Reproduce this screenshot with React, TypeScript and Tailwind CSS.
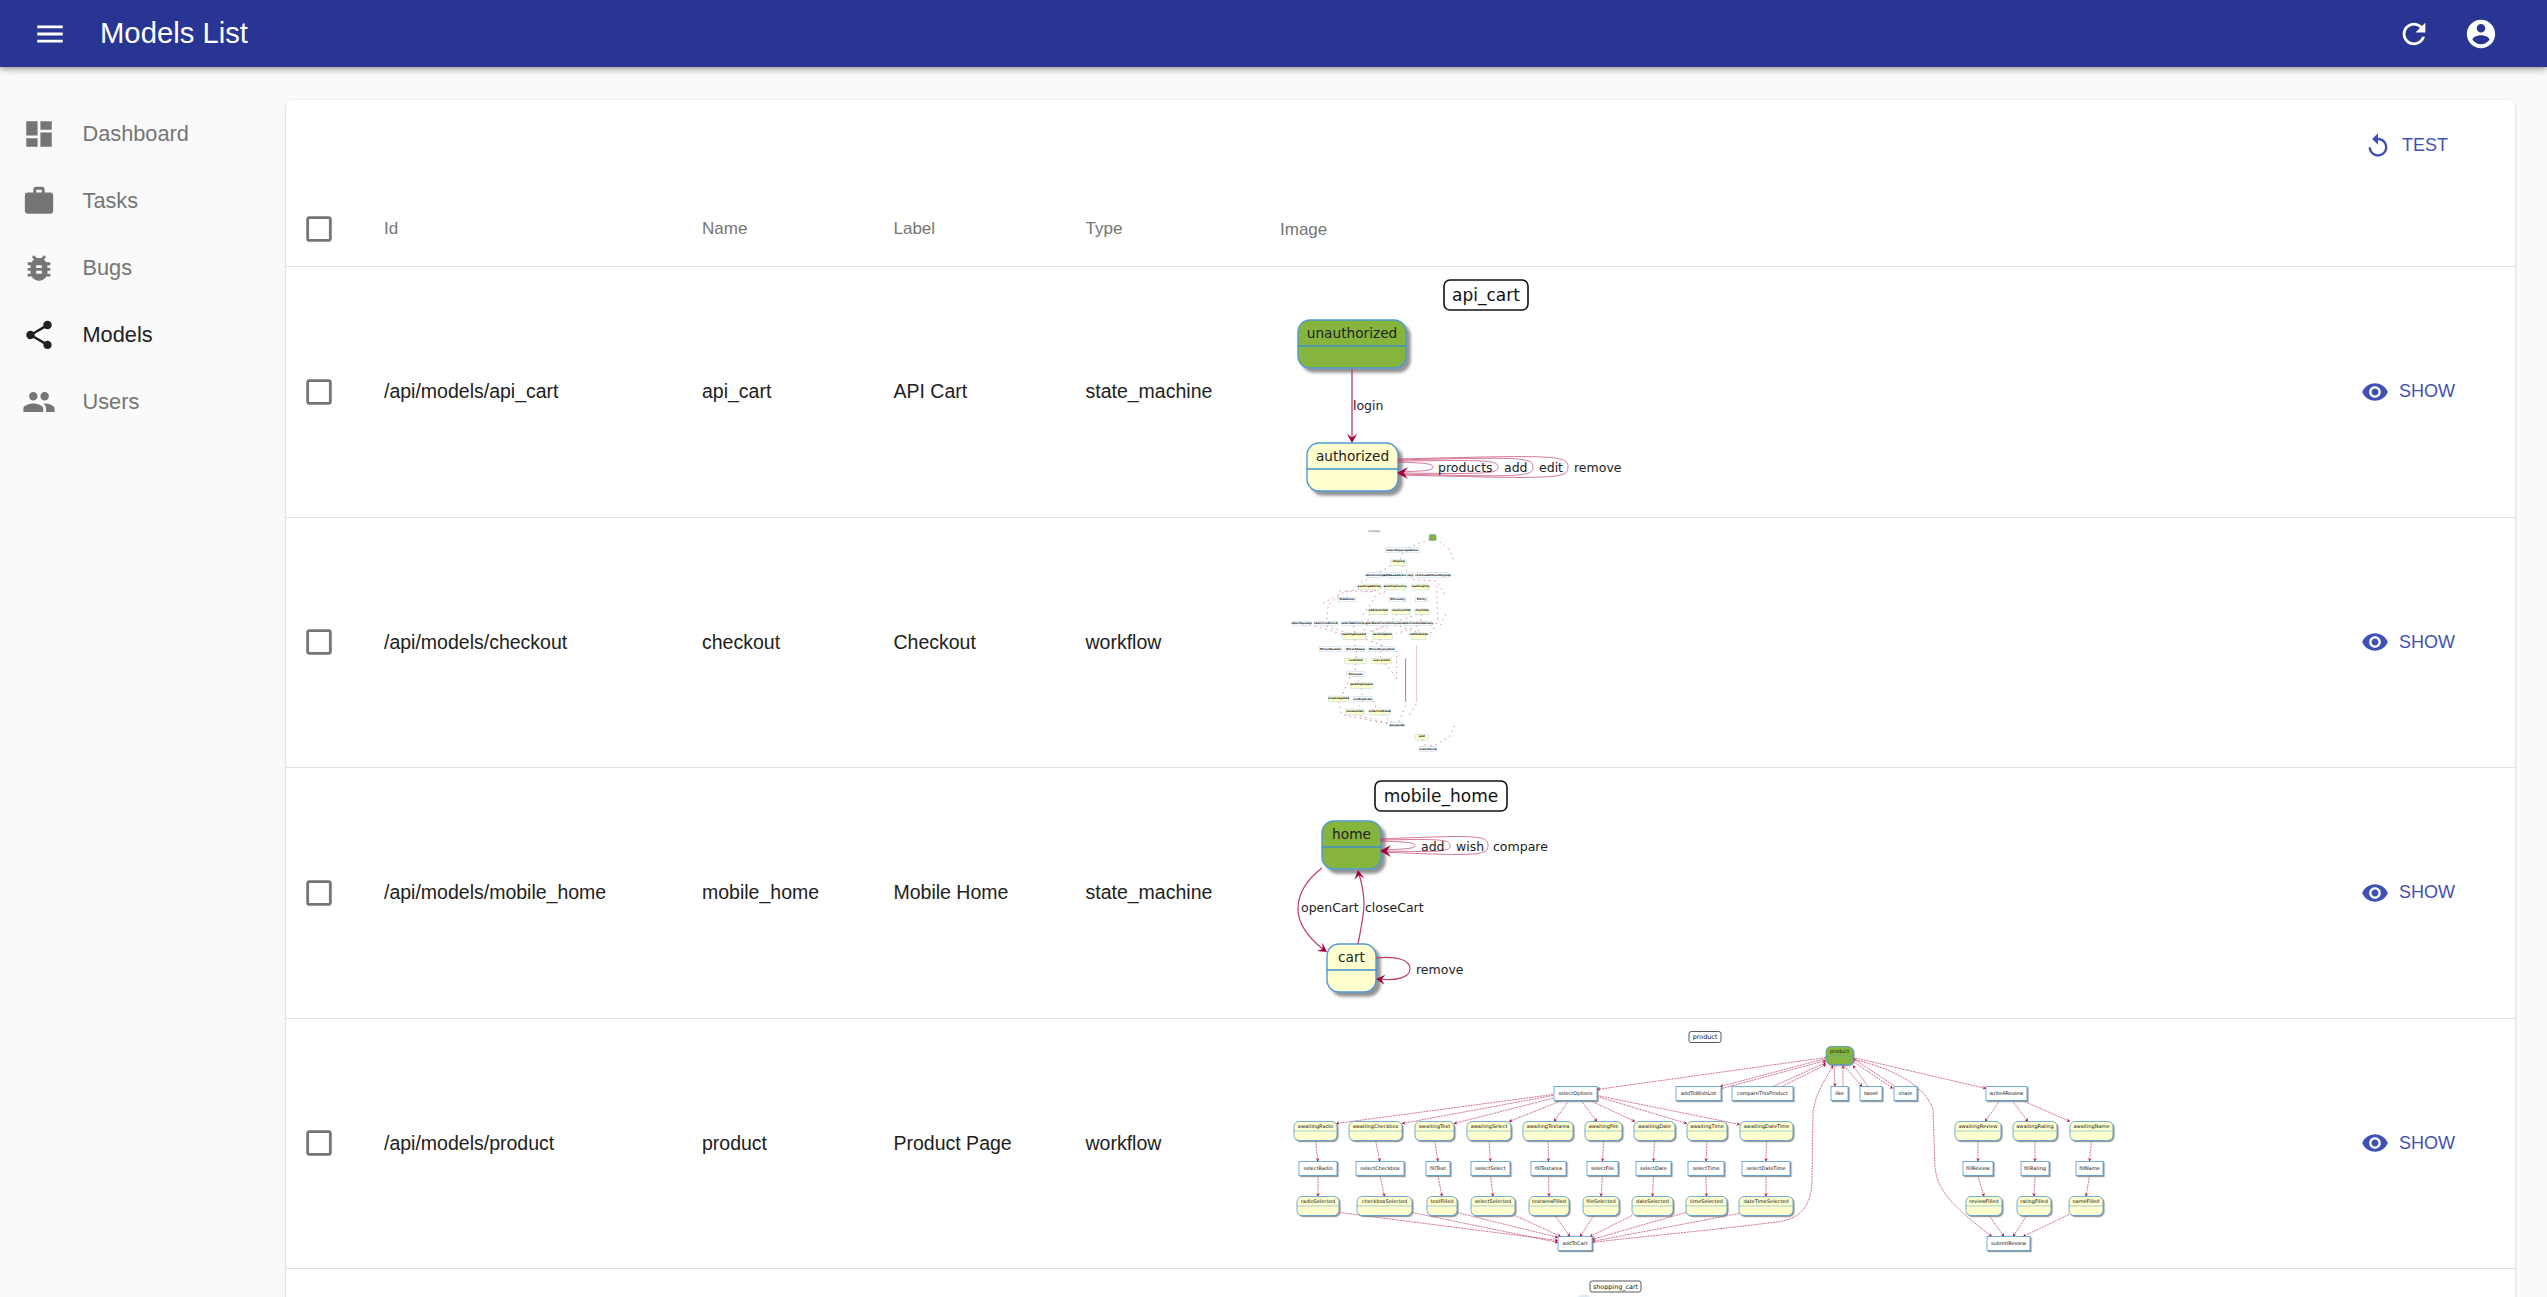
import React from 'react';

const ICONS: Record<string, string> = {
  menu: 'M3 18h18v-2H3v2zm0-5h18v-2H3v2zm0-7v2h18V6H3z',
  refresh: 'M17.65 6.35C16.2 4.9 14.21 4 12 4c-4.42 0-7.99 3.58-7.99 8s3.57 8 7.99 8c3.73 0 6.84-2.55 7.73-6h-2.08c-.82 2.33-3.04 4-5.65 4-3.31 0-6-2.69-6-6s2.69-6 6-6c1.66 0 3.14.69 4.22 1.78L13 11h7V4l-2.35 2.35z',
  account: 'M12 2C6.48 2 2 6.48 2 12s4.48 10 10 10 10-4.48 10-10S17.52 2 12 2zm0 3c1.66 0 3 1.34 3 3s-1.34 3-3 3-3-1.34-3-3 1.34-3 3-3zm0 14.2c-2.5 0-4.71-1.28-6-3.22.03-1.99 4-3.08 6-3.08 1.99 0 5.97 1.09 6 3.08-1.29 1.94-3.5 3.22-6 3.22z',
  dashboard: 'M3 13h8V3H3v10zm0 8h8v-6H3v6zm10 0h8V11h-8v10zm0-18v6h8V3h-8z',
  work: 'M20 6h-4V4c0-1.11-.89-2-2-2h-4c-1.11 0-2 .89-2 2v2H4c-1.11 0-1.99.89-1.99 2L2 19c0 1.11.89 2 2 2h16c1.11 0 2-.89 2-2V8c0-1.11-.89-2-2-2zm-6 0h-4V4h4v2z',
  bug: 'M20 8h-2.81c-.45-.78-1.07-1.45-1.82-1.96L17 4.41 15.59 3l-2.17 2.17C12.96 5.06 12.49 5 12 5c-.49 0-.96.06-1.41.17L8.41 3 7 4.41l1.62 1.63C7.88 6.55 7.26 7.22 6.81 8H4v2h2.09c-.05.33-.09.66-.09 1v1H4v2h2v1c0 .34.04.67.09 1H4v2h2.81c1.04 1.79 2.97 3 5.19 3s4.15-1.21 5.19-3H20v-2h-2.09c.05-.33.09-.66.09-1v-1h2v-2h-2v-1c0-.34-.04-.67-.09-1H20V8zm-6 8h-4v-2h4v2zm0-4h-4v-2h4v2z',
  share: 'M18 16.08c-.76 0-1.44.3-1.96.77L8.91 12.7c.05-.23.09-.46.09-.7s-.04-.47-.09-.7l7.05-4.11c.54.5 1.25.81 2.04.81 1.66 0 3-1.34 3-3s-1.34-3-3-3-3 1.34-3 3c0 .24.04.47.09.7L8.04 9.81C7.5 9.31 6.79 9 6 9c-1.66 0-3 1.34-3 3s1.34 3 3 3c.79 0 1.5-.31 2.04-.81l7.12 4.16c-.05.21-.08.43-.08.65 0 1.61 1.31 2.92 2.92 2.92 1.61 0 2.92-1.31 2.92-2.92s-1.31-2.92-2.92-2.92z',
  people: 'M16 11c1.66 0 2.99-1.34 2.99-3S17.66 5 16 5c-1.66 0-3 1.34-3 3s1.34 3 3 3zm-8 0c1.66 0 2.99-1.34 2.99-3S9.66 5 8 5C6.34 5 5 6.34 5 8s1.34 3 3 3zm0 2c-2.33 0-7 1.17-7 3.5V19h14v-2.5c0-2.33-4.67-3.5-7-3.5zm8 0c-.29 0-.62.02-.97.05 1.16.84 1.97 1.97 1.97 3.45V19h6v-2.5c0-2.33-4.67-3.5-7-3.5z',
  eye: 'M12 4.5C7 4.5 2.73 7.61 1 12c1.73 4.39 6 7.5 11 7.5s9.27-3.11 11-7.5c-1.73-4.39-6-7.5-11-7.5zM12 17c-2.76 0-5-2.24-5-5s2.24-5 5-5 5 2.24 5 5-2.24 5-5 5zm0-8c-1.66 0-3 1.34-3 3s1.34 3 3 3 3-1.34 3-3-1.34-3-3-3z',
  replay: 'M12 5V1L7 6l5 5V7c3.31 0 6 2.69 6 6s-2.69 6-6 6-6-2.69-6-6H4c0 4.42 3.58 8 8 8s8-3.58 8-8-3.58-8-8-8z',
  checkbox: 'M19 5v14H5V5h14m0-2H5c-1.1 0-2 .9-2 2v14c0 1.1.9 2 2 2h14c1.1 0 2-.9 2-2V5c0-1.1-.9-2-2-2z',
};

const Icon = ({ name, className = 'w-[34px] h-[34px]' }: { name: string; className?: string }) => (
  <svg viewBox="0 0 24 24" className={`shrink-0 fill-current ${className}`}>
    <path d={ICONS[name]} />
  </svg>
);

const LINE = '#c2356a';
const HEAD = '#a80036';
const BORDER = '#4f9ad2';
const FONT = '"DejaVu Sans", sans-serif';

// Arrow head pointing at (x, y), coming from (fx, fy)
const Head = ({ x, y, fx, fy, size = 9 }: { x: number; y: number; fx: number; fy: number; size?: number }) => {
  const a = Math.atan2(y - fy, x - fx);
  const pt = (l: number, s: number) =>
    `${x - Math.cos(a) * l - Math.sin(a) * s},${y - Math.sin(a) * l + Math.cos(a) * s}`;
  return <polygon points={`${x},${y} ${pt(size, size * 0.55)} ${pt(size * 0.6, 0)} ${pt(size, -size * 0.55)}`} fill={HEAD} />;
};

// Big state: header with the name and an empty lower half
const State = ({ x1, y1, x2, y2, div, label, green }: { x1: number; y1: number; x2: number; y2: number; div: number; label: string; green?: boolean }) => (
  <g>
    <rect x={x1} y={y1} width={x2 - x1} height={y2 - y1} rx={12} fill={green ? '#85b53d' : '#fefece'} stroke={BORDER} strokeWidth={1.4} filter="url(#shadow)" />
    <line x1={x1} y1={div} x2={x2} y2={div} stroke="#3f8fca" strokeWidth={1.4} />
    <text x={(x1 + x2) / 2} y={div - 8} textAnchor="middle" fontSize={13.7} fontFamily={FONT} fill="#222">{label}</text>
  </g>
);

const Title = ({ x1, y1, x2, y2, text, size = 17 }: { x1: number; y1: number; x2: number; y2: number; text: string; size?: number }) => (
  <g>
    <rect x={x1} y={y1} width={x2 - x1} height={y2 - y1} rx={size * 0.35} fill="#fff" stroke="#111" strokeWidth={size > 10 ? 1.6 : 0.7} />
    <text x={(x1 + x2) / 2} y={y2 - (y2 - y1) * 0.3} textAnchor="middle" fontSize={size} fontFamily={FONT} fill="#111">{text}</text>
  </g>
);

const Label = ({ x, y, text }: { x: number; y: number; text: string }) => (
  <text x={x} y={y} fontSize={12.5} fontFamily={FONT} fill="#222">{text}</text>
);

const Loop = ({ x, y1, y2, to, spread }: { x: number; y1: number; y2: number; to: number; spread: number }) => (
  <path d={`M${x} ${y1} C${to - 12} ${y1 - spread} ${to} ${y1 - spread} ${to} ${(y1 + y2) / 2} C${to} ${y2 + spread} ${to - 12} ${y2 + spread} ${x + 1} ${y2}`} fill="none" stroke={LINE} strokeWidth={0.8} opacity={0.85} />
);

const CartDiagram = () => (
  <g>
    <Title x1={1444} y1={281} x2={1528} y2={311} text="api_cart" />
    <State x1={1298} y1={321} x2={1406} y2={369} div={347} label="unauthorized" green />
    <State x1={1307} y1={444} x2={1398} y2={492} div={470} label="authorized" />
    <line x1={1352} y1={370} x2={1352} y2={440} stroke={LINE} strokeWidth={1.3} />
    <Head x={1352} y={444} fx={1352} fy={370} />
    <Label x={1353} y={411} text="login" />
    <Loop x={1398} y1={463} y2={473} to={1433} spread={-1} />
    <Loop x={1398} y1={462} y2={474} to={1498} spread={1} />
    <Loop x={1398} y1={461} y2={475} to={1533} spread={3} />
    <Loop x={1398} y1={460} y2={476} to={1568} spread={4} />
    <Head x={1397} y={474} fx={1410} fy={474} size={11} />
    <Label x={1438} y={473} text="products" />
    <Label x={1504} y={473} text="add" />
    <Label x={1539} y={473} text="edit" />
    <Label x={1574} y={473} text="remove" />
  </g>
);

const HomeDiagram = () => (
  <g>
    <Title x1={1375} y1={782} x2={1507} y2={812} text="mobile_home" />
    <State x1={1322} y1={822} x2={1381} y2={870} div={848} label="home" green />
    <State x1={1327} y1={945} x2={1376} y2={993} div={971} label="cart" />
    <Loop x={1380} y1={842} y2={851} to={1415} spread={-1} />
    <Loop x={1380} y1={841} y2={852} to={1450} spread={1} />
    <Loop x={1380} y1={840} y2={853} to={1488} spread={4} />
    <Head x={1380} y={852} fx={1393} fy={852} size={11} />
    <Label x={1421} y={852} text="add" />
    <Label x={1456} y={852} text="wish" />
    <Label x={1493} y={852} text="compare" />
    <path d="M1322 869 C1305 882 1298 895 1298 910 C1298 926 1310 940 1324 951" fill="none" stroke={LINE} strokeWidth={1.2} />
    <Head x={1327} y={953} fx={1314} fy={944} />
    <path d="M1358 945 C1362 925 1364 915 1364 905 C1364 895 1362 885 1359 875" fill="none" stroke={LINE} strokeWidth={1.2} />
    <Head x={1358} y={871} fx={1360} fy={884} />
    <Label x={1301} y={913} text="openCart" />
    <Label x={1365} y={913} text="closeCart" />
    <path d="M1376 959 C1395 957 1410 960 1410 970 C1410 979 1395 982 1380 980" fill="none" stroke={LINE} strokeWidth={1.1} />
    <Head x={1376} y={980} fx={1388} fy={981} />
    <Label x={1416} y={975} text="remove" />
  </g>
);

// Small boxes of the product diagram
const Box = ({ x1, x2, y1, y2, text }: { x1: number; x2: number; y1: number; y2: number; text: string }) => (
  <g>
    <rect x={x1} y={y1} width={x2 - x1} height={y2 - y1} fill="#fff" stroke={BORDER} strokeWidth={0.8} filter="url(#smallShadow)" />
    <text x={(x1 + x2) / 2} y={(y1 + y2) / 2 + 1.8} textAnchor="middle" fontSize={5} fontFamily={FONT} fill="#111">{text}</text>
  </g>
);

const Pill = ({ x1, x2, y1, y2, text, green }: { x1: number; x2: number; y1: number; y2: number; text: string; green?: boolean }) => (
  <g>
    <rect x={x1} y={y1} width={x2 - x1} height={y2 - y1} rx={5} fill={green ? '#85b53d' : '#fefece'} stroke={BORDER} strokeWidth={0.8} filter="url(#smallShadow)" />
    <line x1={x1} y1={y1 + 9.5} x2={x2} y2={y1 + 9.5} stroke={BORDER} strokeWidth={0.5} />
    <text x={(x1 + x2) / 2} y={y1 + 6.8} textAnchor="middle" fontSize={5} fontFamily={FONT} fill="#111">{text}</text>
  </g>
);

const Edge = ({ p }: { p: number[] }) => (
  <g>
    <line x1={p[0]} y1={p[1]} x2={p[2]} y2={p[3]} stroke={LINE} strokeWidth={0.7} strokeDasharray="2 0.8" />
    <Head x={p[2]} y={p[3]} fx={p[0]} fy={p[1]} size={3.5} />
  </g>
);

const row1: [string, number, number][] = [
  ['addToWishList', 1676, 1721], ['compareThisProduct', 1732, 1793], ['like', 1831, 1848],
  ['tweet', 1860, 1882], ['share', 1894, 1917], ['writeAReview', 1986, 2027],
];

// awaiting / action / selected columns, left to right
const columns: [string, number, number, string, number, number, string, number, number][] = [
  ['awaitingRadio', 1294, 1337, 'selectRadio', 1299, 1337, 'radioSelected', 1297, 1339],
  ['awaitingCheckbox', 1349, 1402, 'selectCheckbox', 1356, 1404, 'checkboxSelected', 1357, 1412],
  ['awaitingText', 1415, 1454, 'fillText', 1426, 1450, 'textFilled', 1427, 1457],
  ['awaitingSelect', 1467, 1511, 'selectSelect', 1471, 1510, 'selectSelected', 1471, 1515],
  ['awaitingTextarea', 1523, 1573, 'fillTextarea', 1531, 1566, 'textareaFilled', 1529, 1569],
  ['awaitingFile', 1585, 1622, 'selectFile', 1587, 1618, 'fileSelected', 1583, 1619],
  ['awaitingDate', 1634, 1675, 'selectDate', 1636, 1671, 'dateSelected', 1632, 1673],
  ['awaitingTime', 1687, 1727, 'selectTime', 1688, 1724, 'timeSelected', 1686, 1727],
  ['awaitingDateTime', 1740, 1793, 'selectDateTime', 1742, 1790, 'dateTimeSelected', 1739, 1793],
  ['awaitingReview', 1955, 2001, 'fillReview', 1963, 1993, 'reviewFilled', 1966, 2002],
  ['awaitingRating', 2013, 2057, 'fillRating', 2021, 2049, 'ratingFilled', 2017, 2051],
  ['awaitingName', 2070, 2113, 'fillName', 2076, 2103, 'nameFilled', 2069, 2103],
];

const productEdges: number[][] = [
  [1826, 1058, 1597, 1090], [1826, 1059, 1720, 1087], [1722, 1089, 1826, 1061], [1773, 1087, 1826, 1063], [1782, 1087, 1826, 1065],
  [1834, 1066, 1835, 1087], [1843, 1087, 1843, 1066], [1844, 1066, 1862, 1087], [1868, 1087, 1853, 1066],
  [1853, 1062, 1893, 1089], [1894, 1086, 1853, 1059], [1853, 1058, 1986, 1089],
  [1553, 1095, 1336, 1124], [1553, 1096, 1402, 1124], [1556, 1098, 1454, 1124], [1562, 1101, 1509, 1122],
  [1569, 1101, 1554, 1122], [1581, 1101, 1597, 1122], [1590, 1101, 1635, 1122], [1597, 1097, 1687, 1124], [1597, 1096, 1740, 1125],
  [1339, 1213, 1558, 1241], [1412, 1213, 1558, 1243], [1457, 1213, 1558, 1238], [1515, 1216, 1561, 1237],
  [1555, 1216, 1570, 1237], [1594, 1216, 1580, 1237], [1632, 1216, 1590, 1237], [1686, 1213, 1592, 1240], [1739, 1214, 1592, 1242],
  [2000, 1101, 1985, 1122], [2012, 1101, 2028, 1122], [2022, 1101, 2070, 1122],
  [1989, 1216, 2004, 1237], [2027, 1216, 2013, 1237], [2069, 1215, 2023, 1237],
];

const ProductDiagram = () => (
  <g>
    <Title x1={1689} y1={1032} x2={1721} y2={1043} text="product" size={6.4} />
    {productEdges.map((p, i) => <Edge key={i} p={p} />)}
    {columns.map((c, i) => {
      const a = (c[1] + c[2]) / 2;
      const b = (c[4] + c[5]) / 2;
      const d = (c[7] + c[8]) / 2;
      return (
        <g key={i}>
          <Edge p={[a, 1141, b, 1162]} />
          <Edge p={[b, 1176, d, 1197]} />
        </g>
      );
    })}
    <path d="M1592 1243 C1650 1236 1720 1230 1780 1222 C1805 1218 1812 1200 1812 1180 L1813 1113 C1815 1095 1825 1080 1832 1068" fill="none" stroke={LINE} strokeWidth={0.7} strokeDasharray="2 0.8" />
    <Head x={1833} y={1066} fx={1829} fy={1073} size={3.5} />
    <path d="M1853 1060 C1890 1068 1925 1085 1933 1110 L1935 1167 C1937 1190 1950 1205 1992 1237" fill="none" stroke={LINE} strokeWidth={0.7} strokeDasharray="2 0.8" />
    <Head x={1992} y={1237} fx={1985} fy={1232} size={3.5} />
    <Pill x1={1826} x2={1853} y1={1047} y2={1065} text="product" green />
    <Box x1={1554} x2={1597} y1={1087} y2={1101} text="selectOptions" />
    {row1.map(r => <Box key={r[0]} x1={r[1]} x2={r[2]} y1={1087} y2={1101} text={r[0]} />)}
    {columns.map(c => (
      <g key={c[0]}>
        <Pill x1={c[1]} x2={c[2]} y1={1122} y2={1141} text={c[0]} />
        <Box x1={c[4]} x2={c[5]} y1={1162} y2={1176} text={c[3]} />
        <Pill x1={c[7]} x2={c[8]} y1={1197} y2={1216} text={c[6]} />
      </g>
    ))}
    <Box x1={1558} x2={1592} y1={1237} y2={1251} text="addToCart" />
    <Box x1={1987} x2={2030} y1={1237} y2={1251} text="submitReview" />
  </g>
);

// Checkout is drawn very small: coordinates are 3x, the group scales them down
const coBoxes: [number, number, number, number, string][] = [
  [346, 448, 100, 113, 'selectShippingAddress'], [292, 338, 175, 188, 'selectExisting'], [351, 398, 175, 188, 'addNewAddress'],
  [410, 431, 175, 188, 'skip'], [442, 536, 175, 188, 'continueWithoutShipping'], [205, 257, 249, 262, 'fillAddress'],
  [359, 407, 249, 262, 'fillCountry'], [436, 472, 249, 262, 'fillCity'], [70, 120, 321, 334, 'selectPayment'],
  [132, 203, 321, 334, 'selectCreditCard'], [216, 279, 321, 334, 'selectDebitCard'], [292, 391, 321, 334, 'selectBankTransferPayment'],
  [403, 485, 321, 334, 'selectCashOnDelivery'], [148, 215, 397, 410, 'fillCardNumber'], [228, 284, 397, 410, 'fillCardName'],
  [297, 373, 397, 410, 'fillCardExpiryDate'], [229, 285, 472, 485, 'fillCoupon'], [250, 307, 547, 560, 'confirmOrder'],
  [362, 401, 625, 637, 'placeOrder'], [448, 500, 697, 710, 'orderPlaced'],
];
const coPills: [number, number, number, number, string][] = [
  [362, 410, 136, 153, 'shipping'], [266, 330, 209, 226, 'awaitingAddress'], [344, 406, 209, 226, 'awaitingCountry'],
  [426, 478, 209, 226, 'awaitingCity'], [296, 353, 283, 300, 'addressFilled'], [366, 421, 283, 300, 'countryFilled'],
  [434, 477, 283, 300, 'cityFilled'], [218, 287, 355, 375, 'awaitingPayment'], [308, 367, 355, 375, 'awaitingBank'],
  [424, 467, 355, 375, 'cashSelected'], [224, 289, 431, 448, 'cardFilled'], [304, 365, 431, 448, 'expiryFilled'],
  [241, 308, 505, 522, 'awaitingCoupon'], [175, 236, 545, 562, 'couponApplied'], [227, 283, 584, 601, 'reviewOrder'],
  [298, 361, 584, 601, 'orderConfirmed'], [436, 475, 660, 677, 'paid'],
];
const coEdges = [
  'M478 75 L400 105 L390 136', 'M498 72 L540 108 L553 140', 'M553 635 L540 665 L500 690 L470 695', 'M398 155 L415 175',
  'M360 155 L300 190 L270 205', 'M345 212 L310 232 L280 232', 'M265 222 L205 240 L150 272', 'M205 245 L175 270 L170 320',
  'M280 300 L320 240 L350 230', 'M430 195 L500 200 L525 240', 'M500 215 L503 320 L480 360', 'M527 300 L510 335',
  'M120 330 L220 360', 'M170 335 L230 355', 'M250 335 L255 355', 'M340 335 L300 355', 'M440 335 L380 358', 'M391 335 L445 355',
  'M300 300 L280 355', 'M380 300 L340 355', 'M455 300 L445 355', 'M253 375 L255 397', 'M330 375 L335 397', 'M290 375 L380 410 L380 500',
  'M260 410 L258 431', 'M330 410 L332 431', 'M255 448 L257 472', 'M345 448 L368 475', 'M255 485 L270 505', 'M240 490 L215 545',
  'M275 522 L278 547', 'M205 562 L215 600 L362 630', 'M278 560 L262 584', 'M310 560 L320 584', 'M255 601 L362 628', 'M340 601 L370 625',
  'M407 575 L385 625', 'M438 570 L420 600', 'M455 677 L470 697', 'M440 300 L290 355', 'M210 230 L320 230',
];

const CheckoutDiagram = () => (
  <g transform="translate(1270 515) scale(0.3333)">
    <text x={313} y={53} textAnchor="middle" fontSize={8} fontFamily={FONT} fill="#111">checkout</text>
    {coEdges.map((d, i) => <path key={i} d={d} fill="none" stroke={LINE} strokeWidth={2.6} strokeDasharray="2 14" strokeLinecap="round" opacity={0.7} />)}
    <line x1={407} y1={432} x2={407} y2={562} stroke="#c0507e" strokeWidth={2.5} />
    <line x1={440} y1={392} x2={440} y2={562} stroke="#e8b4c8" strokeWidth={2.5} />
    <rect x={478} y={60} width={20} height={18} rx={3} fill="#85b53d" stroke={BORDER} strokeWidth={1.5} />
    {coBoxes.map(b => (
      <g key={b[4]}>
        <rect x={b[0]} y={b[2]} width={b[1] - b[0]} height={b[3] - b[2]} fill="#fff" stroke="#a9cde6" strokeWidth={1.4} />
        <text x={(b[0] + b[1]) / 2} y={b[2] + 9} textAnchor="middle" fontSize={7.5} fontWeight="bold" fontFamily={FONT} fill="#000">{b[4]}</text>
      </g>
    ))}
    {coPills.map(b => (
      <g key={b[4]}>
        <rect x={b[0]} y={b[2]} width={b[1] - b[0]} height={b[3] - b[2]} rx={3} fill="#fefece" stroke="#a9cde6" strokeWidth={1.4} />
        <text x={(b[0] + b[1]) / 2} y={b[2] + 8} textAnchor="middle" fontSize={7.5} fontWeight="bold" fontFamily={FONT} fill="#000">{b[4]}</text>
      </g>
    ))}
  </g>
);

const CartRowDiagram = () => (
  <g>
    <Title x1={1590} y1={1282} x2={1641} y2={1293} text="shopping_cart" size={6.4} />
    <rect x={1578} y={1296} width={12} height={14} rx={3} fill="#dcebf6" />
  </g>
);

const models = [
  { id: '/api/models/api_cart', name: 'api_cart', label: 'API Cart', type: 'state_machine', top: 268, Diagram: CartDiagram },
  { id: '/api/models/checkout', name: 'checkout', label: 'Checkout', type: 'workflow', top: 518.5, Diagram: CheckoutDiagram },
  { id: '/api/models/mobile_home', name: 'mobile_home', label: 'Mobile Home', type: 'state_machine', top: 769, Diagram: HomeDiagram },
  { id: '/api/models/product', name: 'product', label: 'Product Page', type: 'workflow', top: 1019.5, Diagram: ProductDiagram },
];

const navItems = [
  { name: 'dashboard', label: 'Dashboard' },
  { name: 'work', label: 'Tasks' },
  { name: 'bug', label: 'Bugs' },
  { name: 'share', label: 'Models', active: true },
  { name: 'people', label: 'Users' },
];

export default function App() {
  return (
    <div className="h-screen overflow-hidden bg-[#fafafa] font-['Liberation_Sans',Arial,sans-serif]">
      {/* shared shadows for the diagrams */}
      <svg width="0" height="0" className="absolute">
        <defs>
          <filter id="shadow" x="-20%" y="-20%" width="150%" height="150%">
            <feDropShadow dx="4" dy="4" stdDeviation="1.6" floodColor="#777" floodOpacity="0.8" />
          </filter>
          <filter id="smallShadow" x="-20%" y="-20%" width="150%" height="150%">
            <feDropShadow dx="1.2" dy="1.2" stdDeviation="0.5" floodColor="#777" floodOpacity="0.8" />
          </filter>
        </defs>
      </svg>

      <header className="relative z-10 flex h-[67px] items-center bg-[#283593] pl-[33px] pr-[49px] text-white shadow-[0_2px_4px_-1px_rgba(0,0,0,0.2),0_4px_5px_0_rgba(0,0,0,0.14),0_1px_10px_0_rgba(0,0,0,0.12)]">
        <Icon name="menu" />
        <h1 className="ml-[33px] flex-1 text-[29.25px] font-normal">Models List</h1>
        <Icon name="refresh" />
        <Icon name="account" className="ml-[33px] w-[34px] h-[34px]" />
      </header>

      <div className="flex">
        <nav className="w-[286px] shrink-0 pt-[33.5px]">
          {navItems.map(item => (
            <div key={item.label} className={`flex h-[67px] items-center pl-[22px] text-[21.75px] ${item.active ? 'text-[#212121]' : 'text-[#757575]'}`}>
              <Icon name={item.name} />
              <span className="ml-[26.5px]">{item.label}</span>
            </div>
          ))}
        </nav>

        <main className="mt-[33px] mr-[32px] flex-1 self-start rounded-[6px] bg-white shadow-[0_1px_3px_0_rgba(0,0,0,0.2),0_1px_1px_0_rgba(0,0,0,0.14),0_2px_1px_-1px_rgba(0,0,0,0.12)]">
          <div className="flex h-[91px] items-center justify-end pr-[67px] text-[18px] text-[#3f51b5]">
            <Icon name="replay" className="w-7 h-7" />
            <span className="ml-[10px]">TEST</span>
          </div>
          <table className="w-full table-fixed border-collapse">
            <colgroup>
              <col className="w-[98px]" />
              <col className="w-[318px]" />
              <col className="w-[191.5px]" />
              <col className="w-[192px]" />
              <col className="w-[194.5px]" />
              <col />
              <col className="w-[175px]" />
            </colgroup>
            <thead>
              <tr className="h-[75.5px] border-b border-[#e0e0e0] text-left text-[17px] text-[#757575]">
                <th className="pl-[16px] font-normal"><Icon name="checkbox" /></th>
                <th className="font-normal">Id</th>
                <th className="font-normal">Name</th>
                <th className="font-normal">Label</th>
                <th className="font-normal">Type</th>
                <th className="pt-[2px] font-normal">Image</th>
                <th />
              </tr>
            </thead>
            <tbody>
              {models.map(({ id, name, label, type, top, Diagram }) => (
                <tr key={id} className="h-[249.5px] border-b border-[#e0e0e0] text-[19.5px] text-[#212121]">
                  <td className="pl-[16px] text-[#757575]"><Icon name="checkbox" /></td>
                  <td>{id}</td>
                  <td>{name}</td>
                  <td>{label}</td>
                  <td>{type}</td>
                  <td className="p-0">
                    <svg width="1000" height="249.5" viewBox={`1280 ${top} 1000 249.5`} className="block">
                      <Diagram />
                    </svg>
                  </td>
                  <td>
                    <div className="flex items-center pl-[21px] text-[18px] text-[#3f51b5]">
                      <Icon name="eye" className="w-7 h-7" />
                      <span className="ml-[10px]">SHOW</span>
                    </div>
                  </td>
                </tr>
              ))}
              {/* next row is only cut into by the window edge: just the top of its image shows */}
              <tr>
                <td colSpan={5} />
                <td className="p-0">
                  <svg width="1000" height="249.5" viewBox="1280 1270 1000 249.5" className="block">
                    <CartRowDiagram />
                  </svg>
                </td>
                <td />
              </tr>
            </tbody>
          </table>
        </main>
      </div>
    </div>
  );
}
